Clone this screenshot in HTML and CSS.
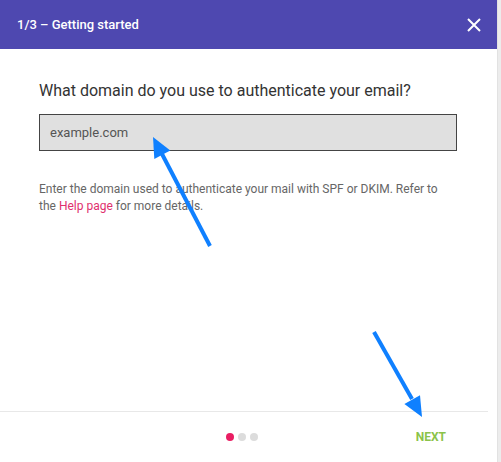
FILE: index.html
```html
<!DOCTYPE html>
<html lang="en">
<head>
  <meta charset="UTF-8">
  <title>Getting started</title>
  <link rel="stylesheet" href="styles.css">
</head>
<body>
  <div class="page">
    <div class="dialog">
      <div class="header">
        <span class="title">1/3 – Getting started</span>
        <svg class="close" width="14" height="14" viewBox="0 0 14 14">
          <path d="M1 1 L13 13 M13 1 L1 13" stroke="#fff" stroke-width="2" fill="none"/>
        </svg>
      </div>

      <div class="content">
        <h2 class="question">What domain do you use to authenticate your email?</h2>
        <div class="field">example.com</div>
        <p class="help">Enter the domain used to authenticate your mail with SPF or DKIM. Refer to the <a href="#">Help page</a> for more details.</p>
      </div>

      <div class="footer">
        <div class="spacer"></div>
        <div class="dots">
          <span class="dot active"></span>
          <span class="dot"></span>
          <span class="dot"></span>
        </div>
        <button class="next">NEXT</button>
      </div>
    </div>
    <div class="scrollbar"></div>
  </div>

  <svg class="arrows" width="501" height="462" viewBox="0 0 501 462">
    <line x1="210" y1="246" x2="162" y2="154" stroke="#0f80ff" stroke-width="4"/>
    <polygon points="153,137 170.3,150.5 154.3,158.9" fill="#0f80ff"/>
    <line x1="374" y1="332" x2="412" y2="399" stroke="#0f80ff" stroke-width="4"/>
    <polygon points="422,417 420,395.2 404.4,404" fill="#0f80ff"/>
  </svg>
</body>
</html>
```

FILE: styles.css
```css
body {
  margin: 0;
  font-family: Roboto, "Liberation Sans", Arial, sans-serif;
  background: #fff;
}
.page {
  display: flex;
  width: 501px;
  height: 462px;
  overflow: hidden;
}
.dialog {
  width: 497px;
  display: flex;
  flex-direction: column;
}
.scrollbar {
  flex: 1;
  background: #ececec;
  border-left: 1px solid #e2e2e2;
}
.header {
  height: 49px;
  background: #4e48b0;
  color: #fff;
  display: flex;
  align-items: center;
  justify-content: space-between;
  padding: 0 16px 0 17px;
}
.title {
  font-size: 13px;
  font-weight: 500;
}
.close {
  display: block;
}
.content {
  flex: 1;
  padding: 32px 40px 0 39px;
}
.question {
  margin: 0;
  font-size: 16px;
  line-height: 20px;
  font-weight: 400;
  color: #333;
}
.field {
  margin-top: 13px;
  height: 35px;
  border: 1px solid #444;
  background: #e0e0e0;
  padding: 0 10px;
  font-size: 13px;
  line-height: 35px;
  color: #555;
}
.help {
  margin: 30px 0 0;
  font-size: 12px;
  line-height: 17px;
  color: #666;
}
.help a {
  color: #e0306e;
  text-decoration: none;
}
.footer {
  height: 50px;
  margin-right: 9px;
  border-top: 1px solid #e8e8e8;
  display: grid;
  grid-template-columns: 1fr auto 1fr;
  align-items: center;
}
.dots {
  display: flex;
  gap: 4px;
  margin-right: 4px;
}
.dot {
  width: 8px;
  height: 8px;
  border-radius: 50%;
  background: #dcdcdc;
}
.dot.active {
  background: #e91e63;
}
.next {
  justify-self: end;
  margin-right: 42px;
  padding: 0;
  border: none;
  background: none;
  font-family: inherit;
  font-size: 12px;
  font-weight: 700;
  color: #8bc34a;
  cursor: pointer;
}
.arrows {
  position: absolute;
  left: 0;
  top: 0;
  pointer-events: none;
}
```
